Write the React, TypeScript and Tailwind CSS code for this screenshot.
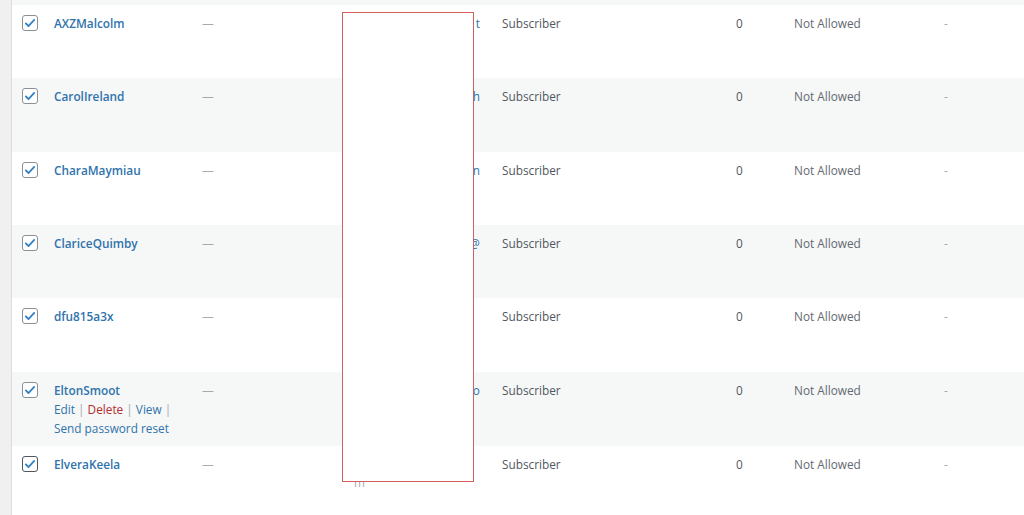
import React from "react";

type User = {
  login: string;
  emailTail: string;
  h: string;
  actions?: boolean;
  focused?: boolean;
  wrap?: boolean;
};

const USERS: User[] = [
  { login: "AXZMalcolm", emailTail: "t", h: "h-[73px]" },
  { login: "CarolIreland", emailTail: "h", h: "h-[74px]" },
  { login: "CharaMaymiau", emailTail: "n", h: "h-[73px]" },
  { login: "ClariceQuimby", emailTail: "@", h: "h-[73px]" },
  { login: "dfu815a3x", emailTail: "", h: "h-[74px]" },
  { login: "EltonSmoot", emailTail: "o", h: "h-[74px]", actions: true },
  { login: "ElveraKeela", emailTail: "", h: "h-[69px]", focused: true, wrap: true },
];

const Check = ({ focused }: { focused?: boolean }) => (
  <span
    className={`flex h-4 w-4 items-center justify-center rounded-[3px] border bg-white ${
      focused ? "border-[#50575e] border-[1.5px]" : "border-[#8c8f94]"
    }`}
  >
    <svg viewBox="0 0 20 20" className="h-[14px] w-[14px]">
      <path d="M4 10.5l3.8 3.8L16 5.6" fill="none" stroke="#3582c4" strokeWidth="2.6" strokeLinecap="round" strokeLinejoin="round" />
    </svg>
  </span>
);

export default function App() {
  return (
    <div className="relative flex h-[515px] w-[1024px] overflow-hidden bg-white font-['Open_Sans',sans-serif] text-[11.8px] text-[#50575e]">
      <div className="w-[12px] shrink-0 border-r border-[#dcdcde] bg-[#f0f0f1]" />
      <div className="flex flex-1 flex-col">
        <div className="h-[5px] bg-[#f6f7f7]" />
        {USERS.map((u, i) => (
          <div
            key={u.login}
            className={`grid ${u.h} grid-cols-[42px_148px_152px_148px_234px_58px_150px_1fr] pt-[8px] leading-[20px] ${
              i % 2 === 1 ? "bg-[#f6f7f7]" : "bg-white"
            }`}
          >
            <div className="pl-[10px] pt-[2px]">
              <Check focused={u.focused} />
            </div>
            <div>
              <div className="font-semibold text-[#2f73ac]">{u.login}</div>
              {u.actions && (
                <div className="leading-[19px] text-[#2f73ac]">
                  <div>
                    Edit <span className="text-[#a7aaad]">|</span>{" "}
                    <span className="text-[#b32d2e]">Delete</span>{" "}
                    <span className="text-[#a7aaad]">|</span> View{" "}
                    <span className="text-[#a7aaad]">|</span>
                  </div>
                  <div>Send password reset</div>
                </div>
              )}
            </div>
            <div className="text-[#a7aaad]">—</div>
            <div className="flex flex-col">
              <div className="pr-[19px] text-right text-[#2f73ac]">{u.emailTail}&nbsp;</div>
              {u.wrap && <div className="-mt-[2px] text-[#a7aaad]">m</div>}
            </div>
            <div>Subscriber</div>
            <div>0</div>
            <div className="text-[#646970]">Not Allowed</div>
            <div className="text-[#a7aaad]">-</div>
          </div>
        ))}
      </div>
      <div className="absolute left-[342px] top-[12px] h-[470px] w-[132px] border border-[#d0605c] bg-white" />
    </div>
  );
}
